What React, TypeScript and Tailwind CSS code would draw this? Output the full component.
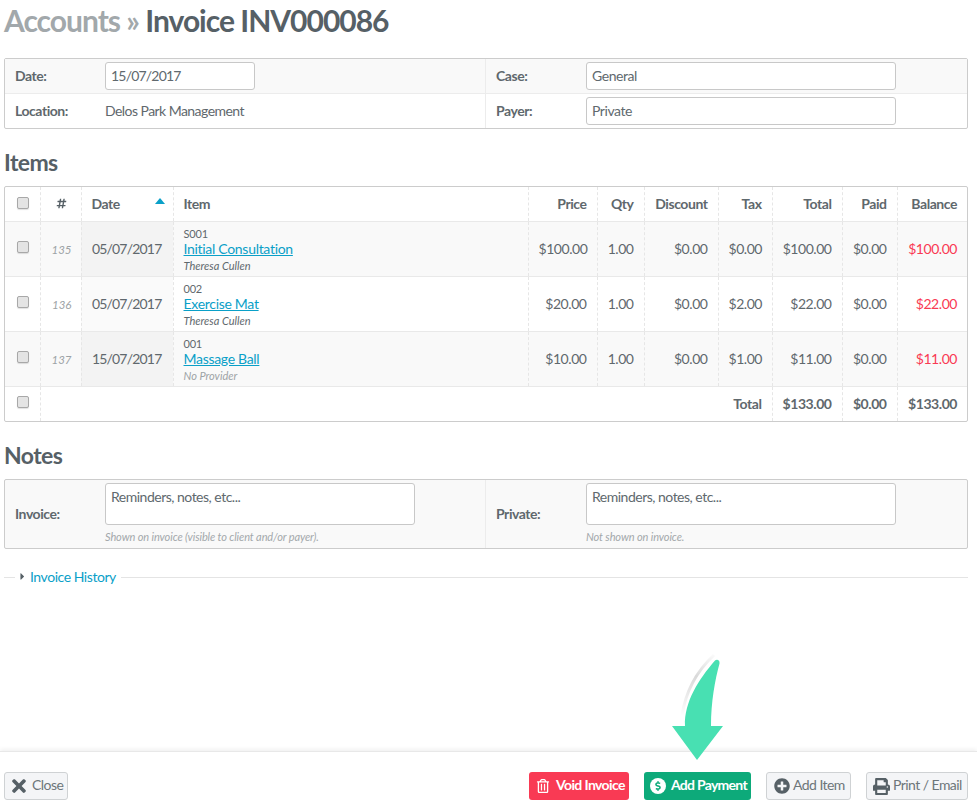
import type { ReactNode } from 'react';
import { FaCaretRight, FaDollarSign, FaHashtag, FaPlusCircle, FaPrint, FaRegTrashAlt, FaTimes } from 'react-icons/fa';

interface Row {
  id: number;
  date: string;
  code: string;
  name: string;
  provider: string;
  price: string;
  tax: string;
  total: string;
}

const rows: Row[] = [
  { id: 135, date: '05/07/2017', code: 'S001', name: 'Initial Consultation', provider: 'Theresa Cullen', price: '$100.00', tax: '$0.00', total: '$100.00' },
  { id: 136, date: '05/07/2017', code: '002', name: 'Exercise Mat', provider: 'Theresa Cullen', price: '$20.00', tax: '$2.00', total: '$22.00' },
  { id: 137, date: '15/07/2017', code: '001', name: 'Massage Ball', provider: 'No Provider', price: '$10.00', tax: '$1.00', total: '$11.00' },
];

const dashed = 'border-r border-dashed border-r-[#e6e6e6]';
const headCell = `px-[10px] text-right font-bold ${dashed}`;
const numCell = `px-[10px] text-right ${dashed}`;
const label = 'w-[100px] shrink-0 pl-[10px] font-bold';
const field = 'rounded-[3px] border border-[#c8c8c8] bg-white px-[5px] text-[#60696e]';

const Check = () => (
  <span className="block h-[12px] w-[12px] rounded-[2px] border border-[#a8a8a8] bg-[#e4e4e4] shadow-[0_1px_1px_rgba(0,0,0,0.12)]" />
);

const FootButton = ({ icon, children, className }: { icon: ReactNode; children: ReactNode; className: string }) => (
  <button className={`flex h-[28px] items-center rounded-[3px] text-[14px] tracking-[-0.55px] whitespace-nowrap ${className}`}>
    {icon}
    <span className="pb-[4px]">{children}</span>
  </button>
);

const GreyButton = 'border border-[#cfd2d4] bg-[#f4f5f7] text-[#6d767a]';

export default function App() {
  return (
    <div className="relative flex h-[810px] flex-col overflow-hidden bg-white font-['Lato',sans-serif] text-[14px] tracking-[-0.45px] text-[#5f686d]">
      <main className="flex-1 pr-[9px] pl-[4px]">
        <h1 className="h-[58px] text-[30px] leading-[40px] font-bold tracking-[-1px] text-[#566066]">
          <span className="text-[#a2a8ab]">Accounts » </span>Invoice INV000086
        </h1>

        <section className="grid h-[71px] grid-cols-[481px_1fr] rounded-[2px] border border-[#cccccc]">
          <div className="flex h-[35px] items-center border-r border-b border-[#ececec] bg-[#f9f9f9] pb-[1px]">
            <span className={label}>Date:</span>
            <div className={`flex h-[28px] w-[150px] items-center tracking-[-0.8px] ${field}`}>15/07/2017</div>
          </div>
          <div className="flex h-[35px] items-center border-b border-[#ececec] bg-[#f9f9f9] pb-[1px]">
            <span className={label}>Case:</span>
            <div className={`flex h-[28px] w-[310px] items-center ${field}`}>General</div>
          </div>
          <div className="flex h-[34px] items-center border-r border-[#ececec] pb-[1px]">
            <span className={label}>Location:</span>
            <span className="tracking-[-0.55px]">Delos Park Management</span>
          </div>
          <div className="flex h-[34px] items-center pb-[1px]">
            <span className={label}>Payer:</span>
            <div className={`flex h-[28px] w-[310px] items-center ${field}`}>Private</div>
          </div>
        </section>

        <h2 className="mt-[17px] h-[40px] text-[23px] leading-[32px] font-bold tracking-[-0.6px] text-[#566066]">Items</h2>

        <div className="h-[236px] rounded-[2px] border border-[#cccccc]">
          <table className="w-full table-fixed border-collapse">
            <colgroup>
              <col className="w-[35px]" />
              <col className="w-[41px]" />
              <col className="w-[92px]" />
              <col />
              <col className="w-[69px]" />
              <col className="w-[47px]" />
              <col className="w-[74px]" />
              <col className="w-[54px]" />
              <col className="w-[70px]" />
              <col className="w-[55px]" />
              <col className="w-[70px]" />
            </colgroup>
            <thead>
              <tr className="h-[34px] border-b border-[#e9e9e9]">
                <th className={dashed}>
                  <div className="flex justify-center pb-[1px] pl-[2px]">
                    <Check />
                  </div>
                </th>
                <th className={`pl-[1px] ${dashed}`}>
                  <FaHashtag className="mx-auto text-[11px] text-[#566066]" />
                </th>
                <th className={`relative px-[10px] text-left font-bold ${dashed}`}>
                  Date
                  <svg className="absolute top-[11px] right-[8px]" width="10" height="6" viewBox="0 0 10 6">
                    <path d="M5 0 L10 6 L0 6 Z" fill="#0aa0c8" />
                  </svg>
                </th>
                <th className={`px-[10px] text-left font-bold ${dashed}`}>Item</th>
                <th className={headCell}>Price</th>
                <th className={headCell}>Qty</th>
                <th className={headCell}>Discount</th>
                <th className={headCell}>Tax</th>
                <th className={headCell}>Total</th>
                <th className={headCell}>Paid</th>
                <th className="px-[10px] text-right font-bold">Balance</th>
              </tr>
            </thead>
            <tbody>
              {rows.map(({ id, date, code, name, provider, price, tax, total }, index) => {
                const odd = index % 2 === 0;
                return (
                  <tr key={id} className={`h-[55px] border-b border-[#e9e9e9] ${odd ? 'bg-[#f9f9f9]' : 'bg-white'}`}>
                    <td className={dashed}>
                      <div className="flex justify-center pb-[3px] pl-[2px]">
                        <Check />
                      </div>
                    </td>
                    <td className={`pt-[2px] pr-[9px] text-right text-[11.5px] tracking-normal text-[#9da3a6] italic ${dashed}`}>{id}</td>
                    <td className={`pr-[11px] text-right tracking-[-0.8px] ${odd ? 'bg-[#f3f3f3]' : 'bg-[#fafafa]'} ${dashed}`}>{date}</td>
                    <td className={`px-[10px] pt-[2px] ${dashed}`}>
                      <div className="text-[11px] leading-[13px] tracking-[-0.2px]">{code}</div>
                      <a className="block text-[14px] leading-[17px] tracking-[-0.3px] text-[#0aa0c8] underline">{name}</a>
                      <div className={`pt-[1px] text-[11px] leading-[15px] tracking-normal italic ${provider === 'No Provider' ? 'text-[#9da3a6]' : 'text-[#5f686d]'}`}>{provider}</div>
                    </td>
                    <td className={numCell}>{price}</td>
                    <td className={numCell}>1.00</td>
                    <td className={numCell}>$0.00</td>
                    <td className={numCell}>{tax}</td>
                    <td className={numCell}>{total}</td>
                    <td className={numCell}>$0.00</td>
                    <td className="px-[10px] text-right text-[#f93a54]">{total}</td>
                  </tr>
                );
              })}
              <tr className="h-[35px]">
                <td className={dashed}>
                  <div className="flex justify-center pb-[4px] pl-[2px]">
                    <Check />
                  </div>
                </td>
                <td colSpan={7} className={`${headCell}`}>Total</td>
                <td className={headCell}>$133.00</td>
                <td className={headCell}>$0.00</td>
                <td className="px-[10px] text-right font-bold">$133.00</td>
              </tr>
            </tbody>
          </table>
        </div>

        <h2 className="mt-[17px] h-[40px] text-[23px] leading-[32px] font-bold tracking-[-0.6px] text-[#566066]">Notes</h2>

        <section className="grid h-[70px] grid-cols-[481px_1fr] rounded-[2px] border border-[#cccccc] bg-[#f9f9f9]">
          <div className="flex border-r border-[#ececec]">
            <span className={`${label} pt-[23px]`}>Invoice:</span>
            <div className="pt-[3px]">
              <div className={`h-[42px] w-[310px] pt-[2px] ${field} tracking-[-0.5px] text-[#7c8488]`}>Reminders, notes, etc...</div>
              <p className="pt-[4px] text-[11px] leading-[15px] tracking-[-0.1px] text-[#a3a8ab] italic">Shown on invoice (visible to client and/or payer).</p>
            </div>
          </div>
          <div className="flex">
            <span className={`${label} pt-[23px]`}>Private:</span>
            <div className="pt-[3px]">
              <div className={`h-[42px] w-[310px] pt-[2px] ${field} tracking-[-0.5px] text-[#7c8488]`}>Reminders, notes, etc...</div>
              <p className="pt-[4px] text-[11px] leading-[15px] tracking-[-0.1px] text-[#a3a8ab] italic">Not shown on invoice.</p>
            </div>
          </div>
        </section>

        <div className="mt-[17px] flex h-[20px] items-center">
          <span className="mt-[2px] h-px w-[11px] bg-[#e4e4e4]" />
          <FaCaretRight className="ml-[2px] text-[11px] text-[#566066]" />
          <a className="mr-[5px] ml-[2px] text-[#0aa0c8]">Invoice History</a>
          <span className="mt-[2px] h-px flex-1 bg-[#e4e4e4]" />
        </div>
      </main>

      <footer className="flex h-[59px] items-start justify-between border-t border-[#e8e8e8] pt-[20px] pr-[9px] pl-[4px] shadow-[0_-2px_4px_rgba(0,0,0,0.06)]">
        <FootButton className={`w-[64px] pl-[4px] ${GreyButton}`} icon={<FaTimes className="mr-[3px] text-[20px] text-[#566066]" />}>
          Close
        </FootButton>
        <div className="flex gap-[15px]">
          <FootButton className="w-[100px] bg-[#f93a54] pl-[7px] font-bold tracking-[-0.62px] text-white" icon={<FaRegTrashAlt className="mr-[6px] text-[14px]" />}>
            Void Invoice
          </FootButton>
          <FootButton
            className="w-[107px] bg-[#0daa7a] pl-[6px] font-bold tracking-[-0.72px] text-white"
            icon={
              <span className="mr-[5px] flex h-[16px] w-[16px] items-center justify-center rounded-full bg-white">
                <FaDollarSign className="text-[10px] text-[#0daa7a]" />
              </span>
            }
          >
            Add Payment
          </FootButton>
          <FootButton className={`w-[85px] pl-[7px] ${GreyButton}`} icon={<FaPlusCircle className="mr-[3px] text-[16px] text-[#566066]" />}>
            Add Item
          </FootButton>
          <FootButton className={`w-[102px] pl-[6px] ${GreyButton}`} icon={<FaPrint className="mr-[3px] text-[17px] text-[#566066]" />}>
            Print / Email
          </FootButton>
        </div>
      </footer>

      <svg className="absolute top-[645px] left-[660px]" width="70" height="120" viewBox="660 645 70 120">
        <defs>
          <linearGradient id="arrowShade" x1="0" y1="0" x2="0" y2="1">
            <stop offset="0" stopColor="#000" stopOpacity="0.02" />
            <stop offset="0.35" stopColor="#000" stopOpacity="0.15" />
            <stop offset="1" stopColor="#000" stopOpacity="0" />
          </linearGradient>
        </defs>
        <path d="M714 655 C700 668 686 688 682 716" fill="none" stroke="url(#arrowShade)" strokeWidth="3" />
        <path
          d="M715 660.5 C717 659 720 660 719.5 663.5 C715 680 711 702 711 726 L723 726 L697 760 L672 726 L685 726 C684 702 699 679 715 660.5 Z"
          fill="#48e0b2"
        />
      </svg>
    </div>
  );
}
